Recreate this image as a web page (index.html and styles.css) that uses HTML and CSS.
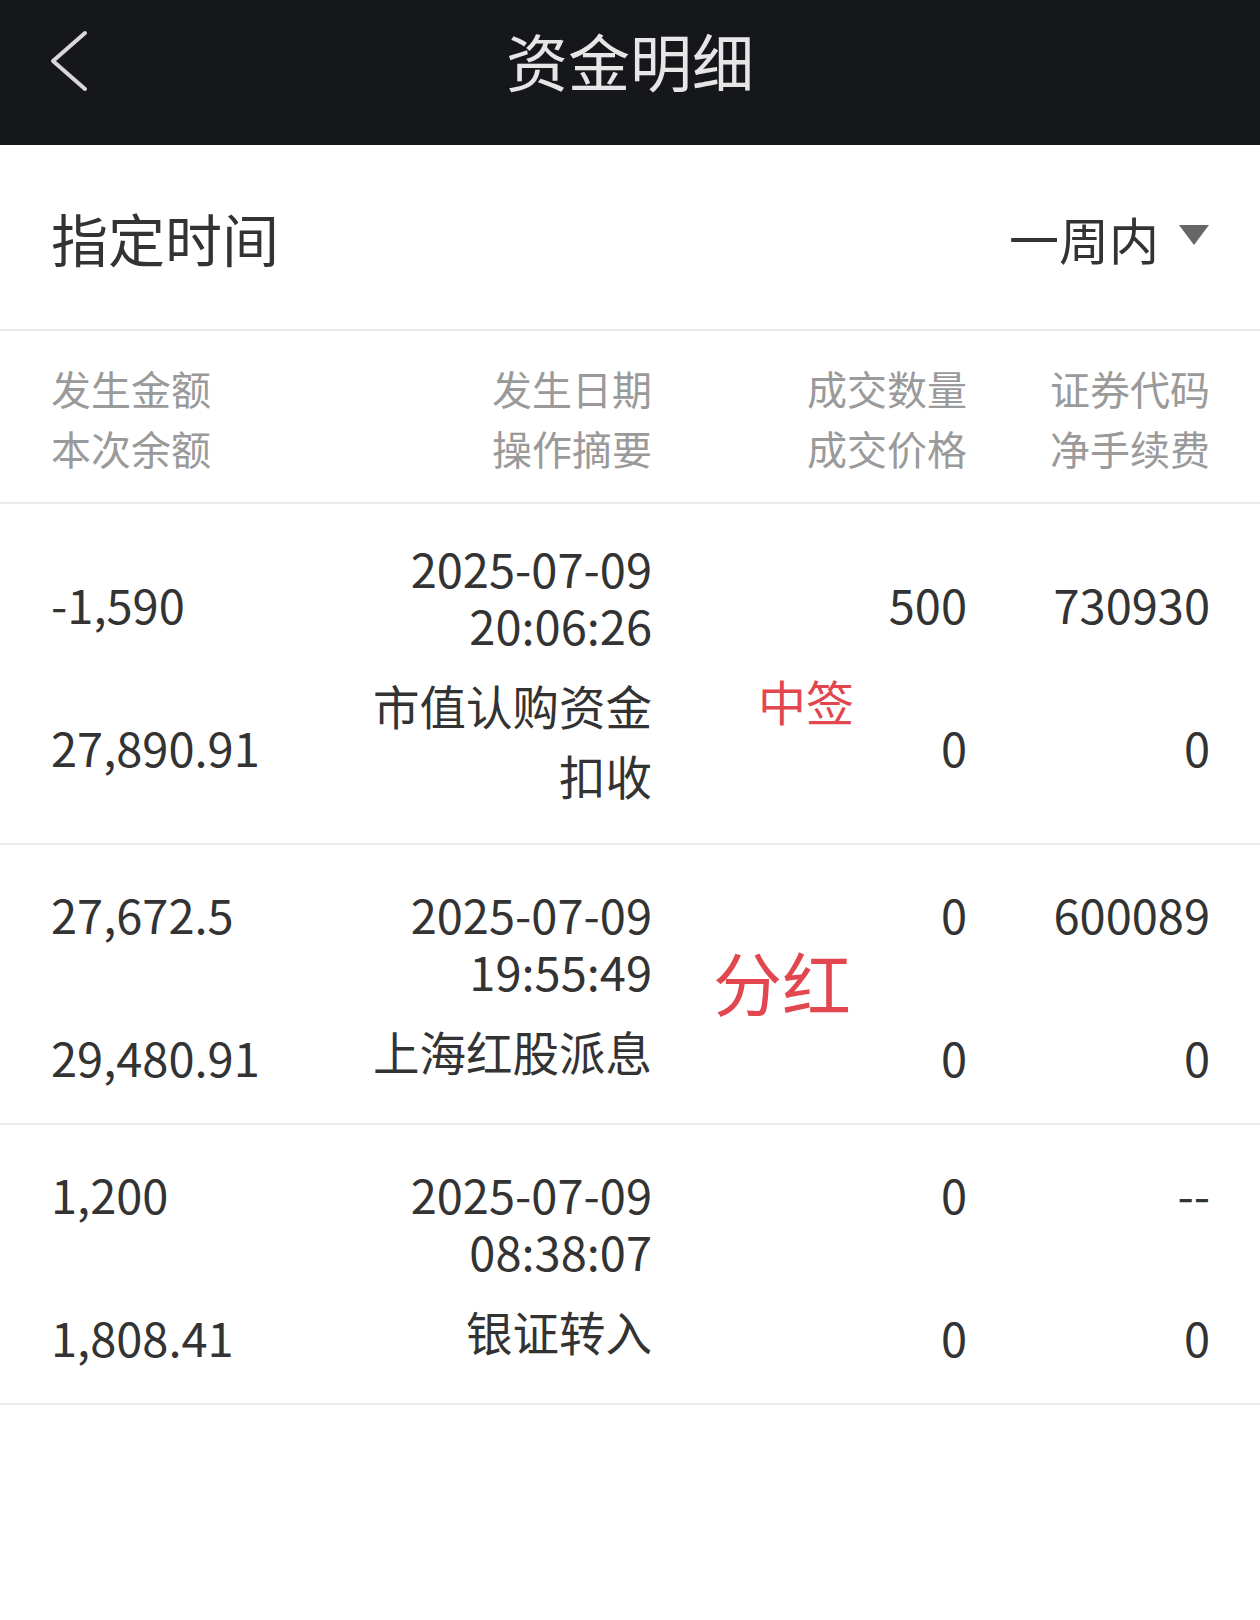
FILE: index.html
```html
<!DOCTYPE html>
<html lang="zh-CN">
<head>
<meta charset="utf-8">
<title>资金明细</title>
<link rel="stylesheet" href="styles.css">
</head>
<body>
<div class="app">
  <header class="topbar">
    <svg class="back" width="40" height="64" viewBox="0 0 40 64" aria-hidden="true">
      <polyline points="35,4 3,32 35,60" fill="none" stroke="#d8d8d8" stroke-width="4" stroke-linecap="round" stroke-linejoin="round"/>
    </svg>
    <h1 class="title">资金明细</h1>
    <span></span>
  </header>

  <div class="filter">
    <span class="filter-label">指定时间</span>
    <span class="filter-value">一周内<span class="caret"></span></span>
  </div>

  <div class="grid thead">
    <div class="hcell left">发生金额
本次余额</div>
    <div class="hcell">发生日期
操作摘要</div>
    <div class="hcell">成交数量
成交价格</div>
    <div class="hcell">证券代码
净手续费</div>
  </div>

  <div class="grid row">
    <div class="pair left"><span>-1,590</span><span>27,890.91</span></div>
    <div class="stack">
      <div class="dt">2025-07-09
20:06:26</div>
      <div class="memo">市值认购资金扣收</div>
    </div>
    <div class="pair"><span>500</span><span>0</span></div>
    <div class="pair"><span>730930</span><span>0</span></div>
    <span class="stamp stamp-sm">中签</span>
  </div>

  <div class="grid row">
    <div class="pair left"><span>27,672.5</span><span>29,480.91</span></div>
    <div class="stack">
      <div class="dt">2025-07-09
19:55:49</div>
      <div class="memo">上海红股派息</div>
    </div>
    <div class="pair"><span>0</span><span>0</span></div>
    <div class="pair"><span>600089</span><span>0</span></div>
    <span class="stamp stamp-lg">分红</span>
  </div>

  <div class="grid row">
    <div class="pair left"><span>1,200</span><span>1,808.41</span></div>
    <div class="stack">
      <div class="dt">2025-07-09
08:38:07</div>
      <div class="memo">银证转入</div>
    </div>
    <div class="pair"><span>0</span><span>0</span></div>
    <div class="pair"><span>--</span><span>0</span></div>
  </div>
</div>
</body>
</html>
```

FILE: styles.css
```css
html, body {
  margin: 0;
  padding: 0;
  background: #ffffff;
}

body {
  font-family: "Noto Sans CJK SC", "Noto Sans", sans-serif;
  color: #333333;
}

.app {
  width: 1260px;
  min-height: 1620px;
  background: #ffffff;
}

/* top bar */
.topbar {
  height: 145px;
  box-sizing: border-box;
  background: #16171a;
  display: grid;
  grid-template-columns: 1fr auto 1fr;
  align-items: start;
}

.back {
  display: block;
  margin: 29px 0 0 50px;
}

.title {
  margin: 29px 0 0;
  font-size: 62px;
  line-height: 1;
  font-weight: 400;
  color: #e6e6e6;
  letter-spacing: 0;
}

/* filter bar */
.filter {
  height: 186px;
  box-sizing: border-box;
  padding: 1px 51px 0 51px;
  display: flex;
  align-items: center;
  justify-content: space-between;
  border-bottom: 2px solid #ebebeb;
}

.filter-label {
  font-size: 57px;
  line-height: 1;
  color: #333333;
}

.filter-value {
  display: flex;
  align-items: center;
  font-size: 50px;
  line-height: 1;
  color: #333333;
}

.caret {
  width: 0;
  height: 0;
  margin-left: 20px;
  margin-top: -6px;
  border-left: 15px solid transparent;
  border-right: 15px solid transparent;
  border-top: 20px solid #666666;
}

/* grid shared */
.grid {
  display: grid;
  grid-template-columns: 302px 299px 315px 243px;
  padding-left: 51px;
  padding-right: 50px;
  border-bottom: 2px solid #ebebeb;
}

/* table head */
.thead {
  padding-top: 27px;
  padding-bottom: 24px;
}

.hcell {
  white-space: pre-line;
  text-align: right;
  font-size: 40px;
  line-height: 60px;
  color: #9a9a9a;
}

.hcell.left {
  text-align: left;
}

/* rows */
.row {
  position: relative;
  padding-top: 35px;
  padding-bottom: 33px;
  align-items: center;
  font-size: 47px;
  color: #333333;
}

.pair {
  display: flex;
  flex-direction: column;
  align-items: flex-end;
  gap: 76px;
  line-height: 67px;
}

.pair.left {
  align-items: flex-start;
}

.stack {
  text-align: right;
}

.dt {
  white-space: pre-line;
  line-height: 57px;
}

.memo {
  margin-top: 17px;
  font-size: 46.5px;
  line-height: 70px;
}

/* red stamps laid over the rows */
.stamp {
  position: absolute;
  line-height: 1;
  color: #e2474f;
  white-space: nowrap;
}

.stamp-sm {
  top: 172px;
  left: 758px;
  font-size: 48px;
}

.stamp-lg {
  top: 102px;
  left: 713px;
  font-size: 69px;
}
```
